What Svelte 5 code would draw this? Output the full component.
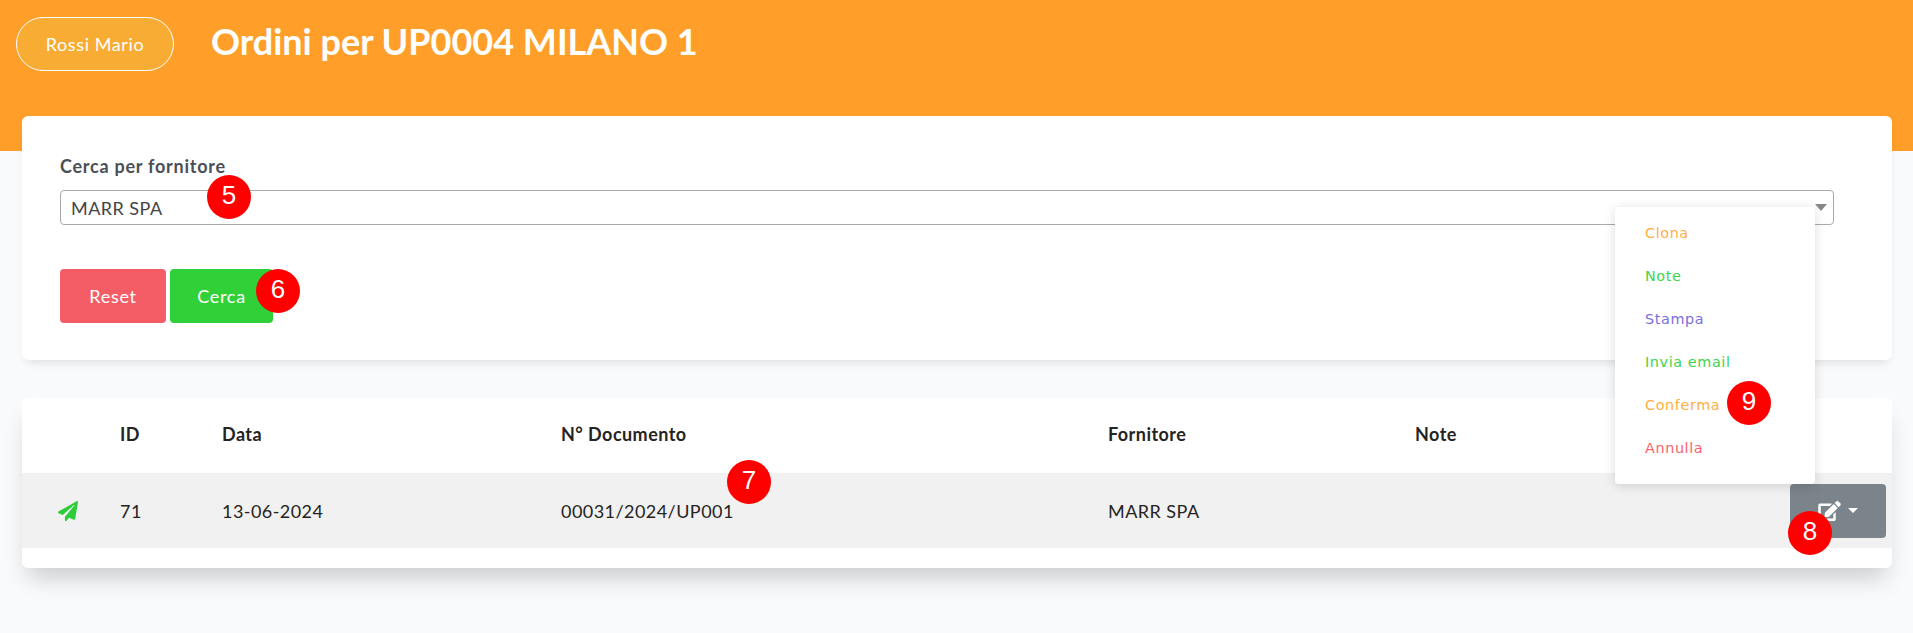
<script>
  const menu = [
    { label: "Clona", cls: "orange" },
    { label: "Note", cls: "green" },
    { label: "Stampa", cls: "violet" },
    { label: "Invia email", cls: "green" },
    { label: "Conferma", cls: "orange" },
    { label: "Annulla", cls: "red" }
  ];
  const badges = [
    { n: 5, x: 229, y: 197 },
    { n: 6, x: 278, y: 291 },
    { n: 7, x: 749, y: 482 },
    { n: 8, x: 1810, y: 533 },
    { n: 9, x: 1749, y: 403 }
  ];
</script>

<main class="page">
  <header class="top">
    <button class="user">Rossi Mario</button>
    <h1>Ordini per UP0004 MILANO 1</h1>
  </header>

  <section class="card search">
    <label class="lbl" for="forn">Cerca per fornitore</label>
    <div class="select" id="forn">
      <span>MARR SPA</span>
      <i class="arrow"></i>
    </div>
    <div class="actions">
      <button class="btn reset">Reset</button>
      <button class="btn go">Cerca</button>
    </div>
  </section>

  <section class="card list">
    <table>
      <thead>
        <tr>
          <th class="c0"></th>
          <th class="c1">ID</th>
          <th class="c2">Data</th>
          <th class="c3">N° Documento</th>
          <th class="c4">Fornitore</th>
          <th class="c5">Note</th>
          <th></th>
        </tr>
      </thead>
      <tbody>
        <tr>
          <td class="ico">
            <svg width="20" height="20" viewBox="0 0 512 512" fill="#2ecc3a">
              <path d="M476 3.2L12.5 270.6c-18.1 10.4-15.8 35.6 2.2 43.2L121 358.4l287.3-253.2c5.5-4.9 13.3 2.6 8.6 8.3L176 407v80.5c0 23.6 28.5 32.9 42.5 15.8L282 426l124.6 52.2c14.2 6 30.4-2.9 33-18.2l72-432C515 7.8 493.3-6.8 476 3.2z" />
            </svg>
          </td>
          <td>71</td>
          <td>13-06-2024</td>
          <td>00031/2024/UP001</td>
          <td>MARR SPA</td>
          <td></td>
          <td class="act">
            <button class="edit" aria-label="Azioni">
              <svg width="23" height="20" viewBox="0 0 576 512" fill="#fff">
                <path d="M402.6 83.2l90.2 90.2c3.8 3.8 3.8 10 0 13.8L274.4 405.6l-92.8 10.3c-12.4 1.4-22.9-9.1-21.5-21.5l10.3-92.8L388.8 83.2c3.8-3.8 10-3.8 13.8 0zm162-22.9l-48.8-48.8c-15.2-15.2-39.9-15.2-55.2 0l-35.4 35.4c-3.8 3.8-3.8 10 0 13.8l90.2 90.2c3.8 3.8 10 3.8 13.8 0l35.4-35.4c15.2-15.3 15.2-40 0-55.2zM384 346.2V448H64V128h229.8c3.2 0 6.2-1.3 8.5-3.5l40-40c7.6-7.6 2.2-20.5-8.5-20.5H48C21.5 64 0 85.5 0 112v352c0 26.5 21.5 48 48 48h352c26.5 0 48-21.5 48-48V306.2c0-10.7-12.9-16-20.5-8.5l-40 40c-2.2 2.3-3.5 5.3-3.5 8.5z" />
              </svg>
              <i class="caret"></i>
            </button>
          </td>
        </tr>
      </tbody>
    </table>
  </section>

  <ul class="menu">
    {#each menu as item}
      <li class={item.cls}>{item.label}</li>
    {/each}
  </ul>

  {#each badges as b}
    <span class="badge" style={`left:${b.x}px; top:${b.y}px;`}>{b.n}</span>
  {/each}
</main>

<style>
  :global(body) {
    margin: 0;
    background: #f9fafc;
  }

  .page {
    position: relative;
    height: 633px;
    overflow: hidden;
    font-family: Lato, sans-serif;
    font-size: 18px;
    letter-spacing: 0.45px;
    color: #252422;
  }

  .top {
    height: 151px;
    background: #ff9f29;
    padding: 17px 0 0 16px;
    box-sizing: border-box;
    display: flex;
    align-items: flex-start;
    gap: 37px;
  }

  .user {
    width: 158px;
    height: 54px;
    border: 1px solid #fff;
    border-radius: 27px;
    background: #f9ac33;
    color: #fff;
    font: 400 18px Lato, sans-serif;
    letter-spacing: 0.6px;
    padding: 0;
  }

  h1 {
    margin: 2px 0 0;
    color: #fff;
    font-size: 36px;
    font-weight: 700;
    letter-spacing: 0;
    line-height: 44px;
  }

  .card {
    background: #fff;
    border-radius: 6px;
    margin: 0 21px 0 22px;
  }

  .search {
    margin-top: -35px;
    height: 244px;
    padding: 40px 58px 0 38px;
    box-sizing: border-box;
    box-shadow: 0 6px 10px -4px rgba(0, 0, 0, 0.12);
  }

  .lbl {
    display: block;
    font-weight: 700;
    letter-spacing: 0.75px;
    color: #4b4f56;
    line-height: 20px;
    height: 34px;
  }

  .select {
    height: 35px;
    box-sizing: border-box;
    border: 1px solid #aaa;
    border-radius: 4px;
    padding: 0 10px;
    display: flex;
    align-items: center;
    justify-content: space-between;
    color: #444;
  }

  .arrow {
    width: 0;
    height: 0;
    border-left: 6px solid transparent;
    border-right: 6px solid transparent;
    border-top: 7px solid #888;
    margin-right: -4px;
  }

  .actions {
    display: flex;
    gap: 4px;
    margin-top: 44px;
  }

  .btn {
    height: 54px;
    border: none;
    border-radius: 4px;
    color: #fff;
    font: 400 18px Lato, sans-serif;
    letter-spacing: 0.7px;
    padding: 0;
  }

  .reset {
    width: 106px;
    background: #f55d66;
  }

  .go {
    width: 103px;
    background: #30d138;
  }

  .list {
    margin-top: 38px;
    height: 170px;
    box-shadow: 0 16px 22px -6px rgba(0, 0, 0, 0.18);
  }

  table {
    width: 100%;
    border-collapse: collapse;
    table-layout: fixed;
  }

  th {
    height: 75px;
    text-align: left;
    font-weight: 700;
    padding: 0 0 3px;
    box-sizing: border-box;
  }

  td {
    height: 75px;
    padding: 0;
    box-sizing: border-box;
    background: #f1f1f1;
  }

  .c0 { width: 98px; }
  .c1 { width: 102px; }
  .c2 { width: 339px; }
  .c3 { width: 547px; }
  .c4 { width: 307px; }
  .c5 { width: 300px; }

  .ico {
    padding-left: 36px;
    line-height: 0;
  }

  .ico svg {
    display: block;
  }

  .act {
    text-align: right;
    padding-right: 6px;
  }

  .edit {
    width: 96px;
    height: 54px;
    background: #7b848b;
    border: none;
    border-radius: 4px;
    display: inline-flex;
    align-items: center;
    justify-content: center;
    gap: 7px;
    padding: 0;
    vertical-align: middle;
  }

  .caret {
    width: 0;
    height: 0;
    border-left: 5px solid transparent;
    border-right: 5px solid transparent;
    border-top: 5px solid #fff;
  }

  .menu {
    position: absolute;
    left: 1615px;
    top: 207px;
    width: 200px;
    height: 277px;
    box-sizing: border-box;
    margin: 0;
    padding: 5px 0 0 30px;
    list-style: none;
    background: #fff;
    border-radius: 4px;
    box-shadow: 0 2px 12px rgba(0, 0, 0, 0.14);
    font-family: "DejaVu Sans", sans-serif;
    font-size: 14.4px;
    letter-spacing: 0.6px;
  }

  .menu li {
    height: 43px;
    line-height: 43px;
  }

  .orange { color: #ffae42; }
  .green { color: #3ed54b; }
  .violet { color: #7a70d8; }
  .red { color: #f9636e; }

  .badge {
    position: absolute;
    width: 44px;
    height: 44px;
    margin: -22px 0 0 -22px;
    border-radius: 50%;
    background: #f00;
    color: #fff;
    font-family: "Liberation Sans", sans-serif;
    font-size: 26px;
    letter-spacing: 0;
    line-height: 41px;
    text-align: center;
  }
</style>
